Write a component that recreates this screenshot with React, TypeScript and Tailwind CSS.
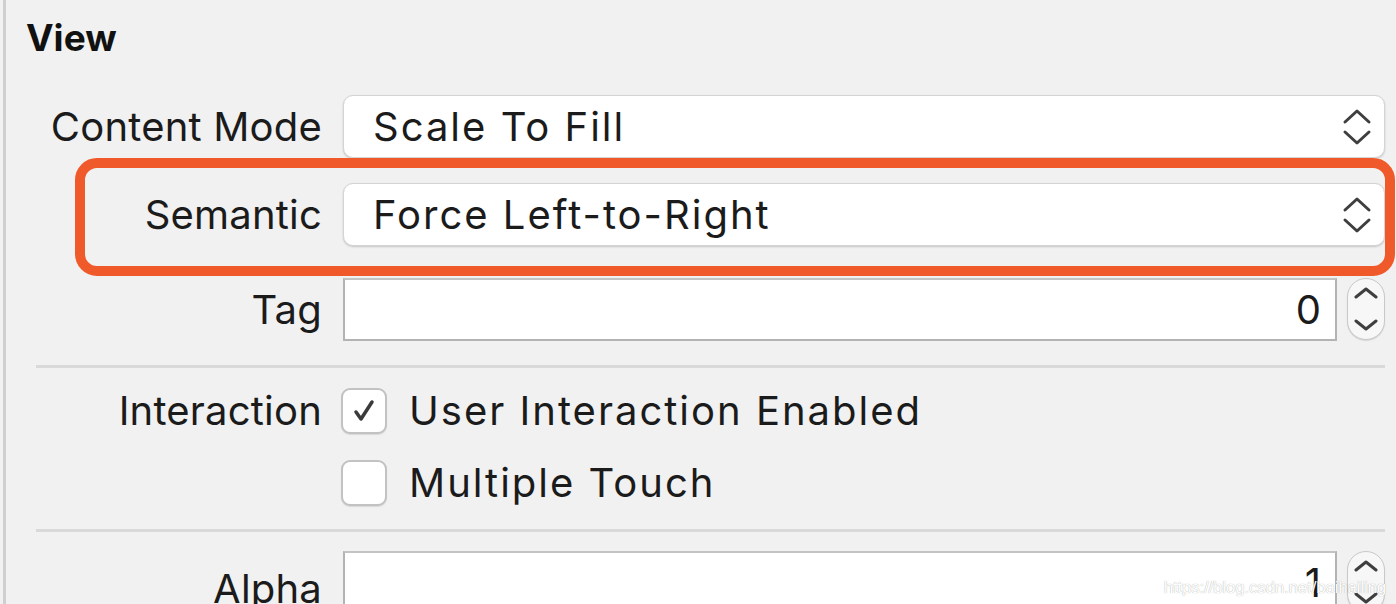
import React from 'react';

const font = { fontFamily: 'Inter, "Noto Sans", sans-serif' };

// 팝업 버튼의 위/아래 화살표
const PopupChevrons = () => (
  <svg width="30" height="38" viewBox="0 0 30 38" fill="none" stroke="#3f3f3f" strokeWidth="3" strokeLinecap="round" strokeLinejoin="round">
    <path d="M3 14 L15 3 L27 14" />
    <path d="M3 24 L15 35 L27 24" />
  </svg>
);

const Stepper = () => (
  <div className="w-[38px] h-[62px] rounded-full bg-[#f7f7f7] border border-[#c9c9c9] shadow-[0_1px_1px_rgba(0,0,0,0.12)] flex flex-col items-center justify-between py-[8px] shrink-0">
    <svg width="24" height="12" viewBox="0 0 24 12" fill="none" stroke="#3f3f3f" strokeWidth="3" strokeLinecap="round" strokeLinejoin="round">
      <path d="M2 10 L12 2 L22 10" />
    </svg>
    <svg width="24" height="12" viewBox="0 0 24 12" fill="none" stroke="#3f3f3f" strokeWidth="3" strokeLinecap="round" strokeLinejoin="round">
      <path d="M2 2 L12 10 L22 2" />
    </svg>
  </div>
);

const Popup = ({ value }: { value: string }) => (
  <div className="h-[63px] flex items-center justify-between bg-white rounded-[10px] border border-[#d4d4d4] shadow-[0_1px_2px_rgba(0,0,0,0.18)] pl-[29px] pr-[12px]">
    <span className="text-[40px] leading-none tracking-[2px] text-[#1b1b1b]">{value}</span>
    <PopupChevrons />
  </div>
);

const NumberField = ({ value }: { value: string }) => (
  <div className="flex items-start gap-[10px]">
    <div className="flex-1 h-[63px] bg-white border-2 border-[#b3b3b3] border-t-[#c3c3c3] flex items-center justify-end pr-[14px]">
      <span className="text-[40px] leading-none text-[#1b1b1b]">{value}</span>
    </div>
    <Stepper />
  </div>
);

const Checkbox = ({ checked }: { checked: boolean }) => (
  <div className="w-[46px] h-[46px] rounded-[9px] bg-white border-2 border-[#c2c2c2] shadow-[0_1px_1px_rgba(0,0,0,0.1)] flex items-center justify-center shrink-0">
    {checked && (
      <svg width="28" height="28" viewBox="0 0 28 28" fill="none" stroke="#3a3a3a" strokeWidth="3.5" strokeLinecap="round" strokeLinejoin="round">
        <path d="M6 15 L11 22 L22 5" />
      </svg>
    )}
  </div>
);

const Label = ({ children }: { children: React.ReactNode }) => (
  <div className="text-right text-[40px] tracking-[0.2px] text-[#1b1b1b] leading-none">{children}</div>
);

export default function App() {
  return (
    <div style={font} className="w-[1396px] h-[604px] overflow-hidden bg-[#f1f1f1] flex relative">
      <div className="w-[3px] ml-[3px] bg-[#cfcfcf] shrink-0" />

      <div className="flex-1 pr-[11px]">
        <div className="h-[95px] pt-[10px] pl-[20px]">
          <span className="text-[37px] font-bold text-[#111]">View</span>
        </div>

        <div className="grid grid-cols-[316px_1fr] gap-x-[21px] items-center">
          <Label>Content Mode</Label>
          <Popup value="Scale To Fill" />
        </div>

        <div className="grid grid-cols-[316px_1fr] gap-x-[21px] items-center mt-[25px]">
          <Label>Semantic</Label>
          <Popup value="Force Left-to-Right" />
        </div>

        <div className="grid grid-cols-[316px_1fr] gap-x-[21px] items-center mt-[32px]">
          <Label>Tag</Label>
          <NumberField value="0" />
        </div>

        <div className="h-[3px] bg-[#d9d9d9] ml-[30px] mt-[24px]" />

        <div className="grid grid-cols-[316px_1fr] gap-x-[19px] items-center mt-[20px]">
          <Label>Interaction</Label>
          <div className="flex items-center gap-[22px]">
            <Checkbox checked />
            <span className="text-[40px] leading-none tracking-[2px] text-[#1b1b1b]">User Interaction Enabled</span>
          </div>
        </div>

        <div className="grid grid-cols-[316px_1fr] gap-x-[19px] items-center mt-[26px]">
          <div />
          <div className="flex items-center gap-[22px]">
            <Checkbox checked={false} />
            <span className="text-[40px] leading-none tracking-[2px] text-[#1b1b1b]">Multiple Touch</span>
          </div>
        </div>

        <div className="h-[3px] bg-[#d9d9d9] ml-[30px] mt-[23px]" />

        <div className="grid grid-cols-[316px_1fr] gap-x-[21px] items-start mt-[19px]">
          <div className="pt-[18px]">
            <Label>Alpha</Label>
          </div>
          <NumberField value="1" />
        </div>
      </div>

      {/* 강조 표시 박스 */}
      <div className="absolute left-[75px] top-[158px] w-[1320px] h-[118px] border-[10px] border-[#f05a2a] rounded-[22px] pointer-events-none" />

      {/* 워터마크 */}
      <div
        className="absolute right-[10px] bottom-[8px] text-[17px] leading-none text-white tracking-[-0.2px]"
        style={{ fontFamily: '"Liberation Sans", Arial, sans-serif', textShadow: '0 0 1px rgba(0,0,0,0.4)' }}
      >
        https://blog.csdn.net/baihailing
      </div>
    </div>
  );
}
